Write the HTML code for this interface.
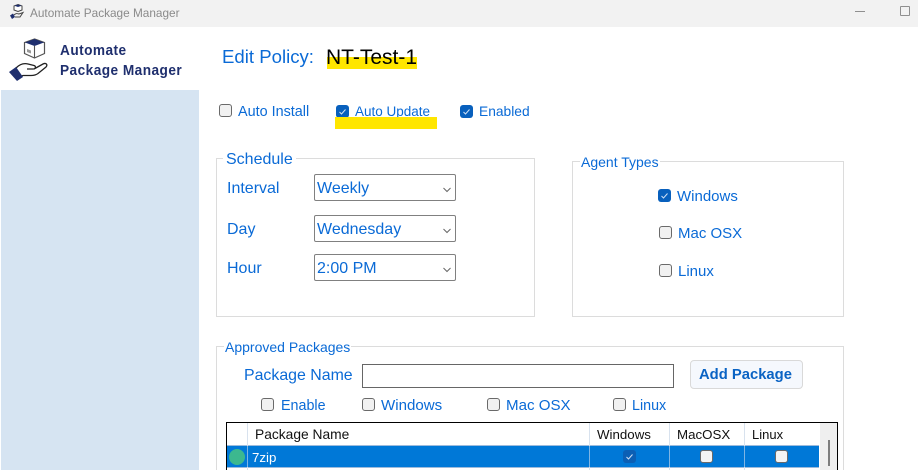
<!DOCTYPE html>
<html><head><meta charset="utf-8"><style>
html,body{margin:0;padding:0;width:918px;height:470px;overflow:hidden;background:#fff;font-family:"Liberation Sans",sans-serif;}
#w{position:relative;width:918px;height:470px;overflow:hidden;}
.a{position:absolute;white-space:nowrap;}
.t{position:absolute;white-space:nowrap;color:#0a6ad6;line-height:1;}
.cb{position:absolute;width:11px;height:11px;border:1px solid #6a6a6a;border-radius:3px;background:#f1f1f1;}
.ck{position:absolute;width:13px;height:13px;border-radius:3px;background:#0860bd;}
.ck svg{position:absolute;left:0;top:0;}
.fs{position:absolute;border:1px solid #dcdcdc;box-sizing:border-box;}
.sel{position:absolute;left:314px;width:142px;height:27px;box-sizing:border-box;border:1px solid #808080;border-radius:2px;background:#fff;}
.sel svg{position:absolute;left:128px;top:12px;}
.lg{font-size:15px;line-height:16px;font-weight:bold;color:#1f2f6e;letter-spacing:.5px;transform:scaleX(.91);transform-origin:0 0;}
</style></head><body><div id="w">
<div class="a" style="left:0;top:0;width:918px;height:27px;background:#f2f2f2"></div>
<svg class="a" style="left:8px;top:3px" width="18" height="18" viewBox="0 0 18 18"><path d="M10 1.500l4 1.500v4l-4 1.500-4-1.500V3z" fill="#fff" stroke="#444" stroke-width="1"/><path d="M6.500 2.800L10 1.500l3.500 1.300L10 4z" fill="#1f2f6e"/><path d="M6 12c2-2 3-1.500 5-1l4-1.500-3 4.500H7" fill="none" stroke="#444" stroke-width="1"/><path d="M2 12.500l3-2 2 3.500-3 2z" fill="#1f2f6e"/></svg>
<div class="a" style="left:30px;top:6px;font-size:11.800px;line-height:14px;color:#8a8a8a">Automate Package Manager</div>
<div class="a" style="left:855px;top:11px;width:10px;height:1px;background:#8f8f8f"></div>
<div class="a" style="left:900px;top:6px;width:8px;height:8px;border:1px solid #8f8f8f;border-radius:1px"></div>

<svg class="a" style="left:8px;top:38px" width="46" height="45" viewBox="0 0 46 45">
<path d="M26.500 1l10 3.500v11l-10 4.500-10-4.500v-11z" fill="#fff" stroke="#555" stroke-width="1.200"/>
<path d="M17 4.500L26.500 1l9.500 3.500-9.500 3.500z" fill="#1f2f6e"/>
<path d="M26.500 8v12" fill="none" stroke="#555" stroke-width="1.100"/>
<path d="M19 11l4 1.500v3l-4-1.500z" fill="#999"/>
<path d="M8 30c4-4 8-5 12-4l6 1.500c2 .5 2 3.500-1 3.500h-6m7 0l9-5c3-1.500 5 .5 3 3l-8 6.500c-2 1.500-4 2-7 2H15l-3 1" fill="none" stroke="#222" stroke-width="1.300"/>
<path d="M1 34l7-5 7 10-6 4z" fill="#1f2f6e"/>
</svg>
<div class="a lg" style="left:60px;top:43px">Automate</div>
<div class="a lg" style="left:60px;top:63px">Package Manager</div>
<div class="a" style="left:1px;top:90px;width:198px;height:380px;background:#d6e4f2"></div>

<div class="t" style="left:222px;top:48px;font-size:18.600px">Edit Policy:</div>
<div class="a" style="left:327px;top:57px;width:90px;height:12px;background:#ffe600"></div>
<div class="a" style="left:326px;top:47px;font-size:21px;line-height:22px;color:#000">NT-Test-1</div>

<div class="cb" style="left:219px;top:104px"></div>
<div class="t" style="left:238px;top:105px;font-size:14.400px">Auto Install</div>
<div class="ck" style="left:336px;top:105px"><svg width="13" height="13"><path d="M3.500 7l2 2 4-4.500" fill="none" stroke="#cfe0f5" stroke-width="1"/></svg></div>
<div class="t" style="left:355px;top:105px;font-size:13.500px">Auto Update</div>
<div class="a" style="left:335px;top:117px;width:102px;height:12px;background:#ffe600"></div>
<div class="ck" style="left:460px;top:105px"><svg width="13" height="13"><path d="M3.500 7l2 2 4-4.500" fill="none" stroke="#cfe0f5" stroke-width="1"/></svg></div>
<div class="t" style="left:479px;top:105px;font-size:13.800px">Enabled</div>

<div class="fs" style="left:216px;top:158px;width:319px;height:159px"></div>
<div class="t" style="left:223px;top:152px;font-size:16px;background:#fff;padding:0 3px">Schedule</div>
<div class="t" style="left:227px;top:181px;font-size:16px">Interval</div>
<div class="t" style="left:227px;top:222px;font-size:16px">Day</div>
<div class="t" style="left:227px;top:261px;font-size:16px">Hour</div>
<div class="sel" style="top:174px"><svg width="9" height="6"><path d="M.5 1l3.500 3.500L7.500 1" fill="none" stroke="#666" stroke-width="1"/></svg></div>
<div class="t" style="left:317px;top:181px;font-size:16px">Weekly</div>
<div class="sel" style="top:215px"><svg width="9" height="6"><path d="M.5 1l3.500 3.500L7.500 1" fill="none" stroke="#666" stroke-width="1"/></svg></div>
<div class="t" style="left:317px;top:222px;font-size:16px">Wednesday</div>
<div class="sel" style="top:254px"><svg width="9" height="6"><path d="M.5 1l3.500 3.500L7.500 1" fill="none" stroke="#666" stroke-width="1"/></svg></div>
<div class="t" style="left:317px;top:261px;font-size:16px">2:00 PM</div>

<div class="fs" style="left:572px;top:161px;width:272px;height:156px"></div>
<div class="t" style="left:580px;top:155px;font-size:14px;background:#fff;padding:0 1px">Agent Types</div>
<div class="ck" style="left:658px;top:189px"><svg width="13" height="13"><path d="M3.500 7l2 2 4-4.500" fill="none" stroke="#cfe0f5" stroke-width="1"/></svg></div>
<div class="t" style="left:677px;top:189px;font-size:15px">Windows</div>
<div class="cb" style="left:659px;top:226px"></div>
<div class="t" style="left:678px;top:226px;font-size:15px">Mac OSX</div>
<div class="cb" style="left:659px;top:264px"></div>
<div class="t" style="left:678px;top:264px;font-size:15px">Linux</div>

<div class="fs" style="left:216px;top:346px;width:628px;height:140px"></div>
<div class="t" style="left:224px;top:340px;font-size:14px;background:#fff;padding:0 1px">Approved Packages</div>
<div class="t" style="left:244px;top:368px;font-size:15.900px">Package Name</div>
<div class="a" style="left:362px;top:364px;width:312px;height:24px;box-sizing:border-box;border:1px solid #666"></div>
<div class="a" style="left:690px;top:360px;width:113px;height:29px;box-sizing:border-box;border:1px solid #d9d9d9;border-radius:4px;background:#f5f8fd"></div>
<div class="a" style="left:699px;top:367px;font-size:14.800px;line-height:16px;font-weight:bold;color:#0a63c4">Add Package</div>
<div class="cb" style="left:261px;top:398px"></div>
<div class="t" style="left:281px;top:399px;font-size:14.300px">Enable</div>
<div class="cb" style="left:362px;top:398px"></div>
<div class="t" style="left:381px;top:398px;font-size:15.100px">Windows</div>
<div class="cb" style="left:487px;top:398px"></div>
<div class="t" style="left:506px;top:398px;font-size:15.100px">Mac OSX</div>
<div class="cb" style="left:613px;top:398px"></div>
<div class="t" style="left:632px;top:399px;font-size:14.300px">Linux</div>

<div class="a" style="left:226px;top:422px;width:612px;height:60px;box-sizing:border-box;border:1px solid #000;background:#fff"></div>
<div class="a" style="left:227px;top:445px;width:592px;height:1px;background:#9dbbdc"></div>
<div class="a" style="left:227px;top:446px;width:592px;height:21px;background:#0078d7"></div>
<div class="a" style="left:227px;top:467px;width:592px;height:1px;background:#9dbbdc"></div>
<div class="a" style="left:247px;top:423px;width:1px;height:47px;background:#d8e2ee"></div>
<div class="a" style="left:589px;top:423px;width:1px;height:47px;background:#d8e2ee"></div>
<div class="a" style="left:669px;top:423px;width:1px;height:47px;background:#d8e2ee"></div>
<div class="a" style="left:744px;top:423px;width:1px;height:47px;background:#d8e2ee"></div>
<div class="a" style="left:247px;top:446px;width:1px;height:21px;background:#7fb5e4"></div>
<div class="a" style="left:589px;top:446px;width:1px;height:21px;background:#7fb5e4"></div>
<div class="a" style="left:669px;top:446px;width:1px;height:21px;background:#7fb5e4"></div>
<div class="a" style="left:744px;top:446px;width:1px;height:21px;background:#7fb5e4"></div>
<div class="a" style="left:820px;top:423px;width:17px;height:47px;background:#efefef"></div>
<div class="a" style="left:828px;top:440px;width:2px;height:26px;background:#7d7d7d"></div>
<div class="a" style="left:255px;top:428px;font-size:13.800px;line-height:14px;color:#111">Package Name</div>
<div class="a" style="left:597px;top:428px;font-size:13.300px;line-height:14px;color:#111">Windows</div>
<div class="a" style="left:677px;top:428px;font-size:13.300px;line-height:14px;color:#111">MacOSX</div>
<div class="a" style="left:752px;top:428px;font-size:13px;line-height:14px;color:#111">Linux</div>
<div class="a" style="left:229px;top:449px;width:16px;height:16px;border-radius:50%;background:#3cb88f"></div>
<div class="a" style="left:252px;top:450px;font-size:13.300px;line-height:16px;color:#fff">7zip</div>
<div class="ck" style="left:623px;top:450px;background:#0b5fb5"><svg width="13" height="13"><path d="M3.500 7l2 2 4-4.500" fill="none" stroke="#cfe0f5" stroke-width="1"/></svg></div>
<div class="cb" style="left:700px;top:450px;background:#f4f4f4"></div>
<div class="cb" style="left:775px;top:450px;background:#f4f4f4"></div>
</div></body></html>
